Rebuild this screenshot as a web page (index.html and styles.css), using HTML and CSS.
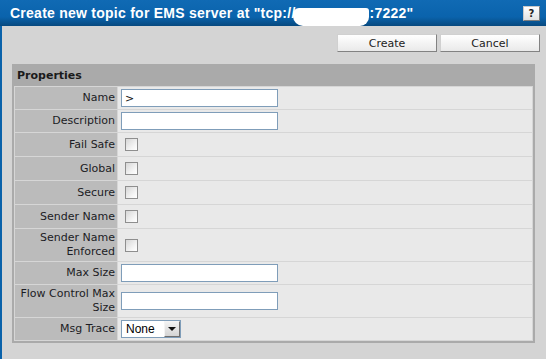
FILE: index.html
```html
<!DOCTYPE html>
<html lang="en">
<head>
    <meta charset="UTF-8">
    <title>Create new topic</title>
    <link rel="stylesheet" href="styles.css">
</head>
<body>
    <div class="dialog">
        <div class="titlebar">
            <h1>Create new topic for EMS server at "tcp://<span class="masked"></span>:7222"</h1>
            <button class="help">?</button>
        </div>

        <div class="toolbar">
            <button class="btn">Create</button>
            <button class="btn">Cancel</button>
        </div>

        <div class="panel">
            <div class="panel-title">Properties</div>
            <table class="props">
                <tr>
                    <td class="label">Name</td>
                    <td class="value"><input type="text" class="field" value="&gt;"></td>
                </tr>
                <tr>
                    <td class="label">Description</td>
                    <td class="value"><input type="text" class="field"></td>
                </tr>
                <tr>
                    <td class="label">Fail Safe</td>
                    <td class="value"><input type="checkbox" class="check"></td>
                </tr>
                <tr>
                    <td class="label">Global</td>
                    <td class="value"><input type="checkbox" class="check"></td>
                </tr>
                <tr>
                    <td class="label">Secure</td>
                    <td class="value"><input type="checkbox" class="check"></td>
                </tr>
                <tr>
                    <td class="label">Sender Name</td>
                    <td class="value"><input type="checkbox" class="check"></td>
                </tr>
                <tr>
                    <td class="label">Sender Name Enforced</td>
                    <td class="value"><input type="checkbox" class="check"></td>
                </tr>
                <tr>
                    <td class="label">Max Size</td>
                    <td class="value"><input type="text" class="field"></td>
                </tr>
                <tr>
                    <td class="label">Flow Control Max Size</td>
                    <td class="value"><input type="text" class="field"></td>
                </tr>
                <tr>
                    <td class="label">Msg Trace</td>
                    <td class="value">
                        <div class="select">
                            <span class="select-text">None</span>
                            <span class="select-arrow"></span>
                        </div>
                    </td>
                </tr>
            </table>
        </div>
    </div>
</body>
</html>
```

FILE: styles.css
```css
body {
    margin: 0;
    font-family: 'DejaVu Sans', Verdana, sans-serif;
    font-size: 11px;
    color: #1c1c24;
    background: #d4d4d4;
}

.dialog {
    min-height: 100vh;
    border-left: 2px solid #0a62aa;
    background: #d4d4d4;
}

.titlebar {
    display: flex;
    align-items: center;
    justify-content: space-between;
    height: 26px;
    margin-left: -2px;
    padding: 0 6px 0 10px;
    background: linear-gradient(to bottom, #106ab4 0%, #0a63ac 65%, #07497f 100%);
}

.titlebar h1 {
    margin: 0;
    font-family: 'Liberation Sans', Arial, sans-serif;
    font-size: 14px;
    font-weight: bold;
    letter-spacing: 0.25px;
    color: #fff;
    white-space: nowrap;
    line-height: 26px;
}

.masked {
    display: inline-block;
    width: 76px;
    height: 18px;
    margin-left: -3px;
    margin-right: 1px;
    vertical-align: -8px;
    background: #fff;
    border-radius: 6px 3px 9px 10px;
}

.help {
    width: 17px;
    height: 15px;
    padding: 0;
    font-family: 'DejaVu Sans', Verdana, sans-serif;
    font-size: 10px;
    font-weight: bold;
    color: #222;
    border: 1px solid #8a8a8a;
    border-color: #c9c9c9 #7d7d7d #7d7d7d #c9c9c9;
    background: linear-gradient(#ffffff, #e2e2e2);
}

.toolbar {
    display: flex;
    justify-content: flex-end;
    gap: 3px;
    padding: 8px 6px 0 0;
    margin-bottom: 12px;
}

.btn {
    width: 100px;
    height: 18px;
    padding: 0;
    font-family: 'DejaVu Sans', Verdana, sans-serif;
    font-size: 11px;
    color: #222;
    border: 1px solid #8a8a8a;
    border-color: #d0d0d0 #828282 #828282 #d0d0d0;
    background: linear-gradient(#ffffff, #e9e9e9);
}

.panel {
    margin: 0 11px 0 10px;
    padding: 0 2px 2px 2px;
    background: #aaaaaa;
}

.panel-title {
    height: 22px;
    line-height: 24px;
    padding-left: 3px;
    font-weight: bold;
    color: #1a1a1a;
}

.props {
    width: 100%;
    border-spacing: 1px;
    background: #d6d6d6;
    table-layout: fixed;
}

.props td {
    padding: 2px;
    line-height: 14px;
    vertical-align: middle;
}

.props .label {
    width: 97px;
    padding-left: 3px;
    text-align: right;
    background: #bbbbbb;
}

.props .value {
    padding-left: 3px;
    background: #e9e9e9;
}

.field {
    display: block;
    box-sizing: border-box;
    width: 157px;
    height: 18px;
    margin: 0;
    padding: 0 3px;
    font-family: 'DejaVu Sans', Verdana, sans-serif;
    font-size: 11px;
    color: #111;
    border: 1px solid #7f9db9;
    background: #fff;
}

.check {
    appearance: none;
    display: block;
    width: 13px;
    height: 13px;
    margin: 3px 0 3px 4px;
    border: 1px solid #8e8e8e;
    background: linear-gradient(135deg, #d6d6d6 0%, #f6f6f6 70%, #ffffff 100%);
}

.select {
    display: flex;
    align-items: center;
    justify-content: space-between;
    box-sizing: border-box;
    width: 60px;
    height: 18px;
    border: 1px solid #7f9db9;
    background: #fff;
}

.select-text {
    padding-left: 4px;
    font-family: 'Liberation Sans', Arial, sans-serif;
    font-size: 12px;
    color: #000;
}

.select-arrow {
    position: relative;
    box-sizing: border-box;
    width: 16px;
    height: 16px;
    border: 1px solid #9a9a9a;
    border-color: #f4f4f4 #6f6f6f #6f6f6f #f4f4f4;
    background: linear-gradient(#f2f2f2, #d4d4d4);
}

.select-arrow::after {
    content: '';
    position: absolute;
    left: 3px;
    top: 5px;
    border-left: 4px solid transparent;
    border-right: 4px solid transparent;
    border-top: 4px solid #111;
}
```
